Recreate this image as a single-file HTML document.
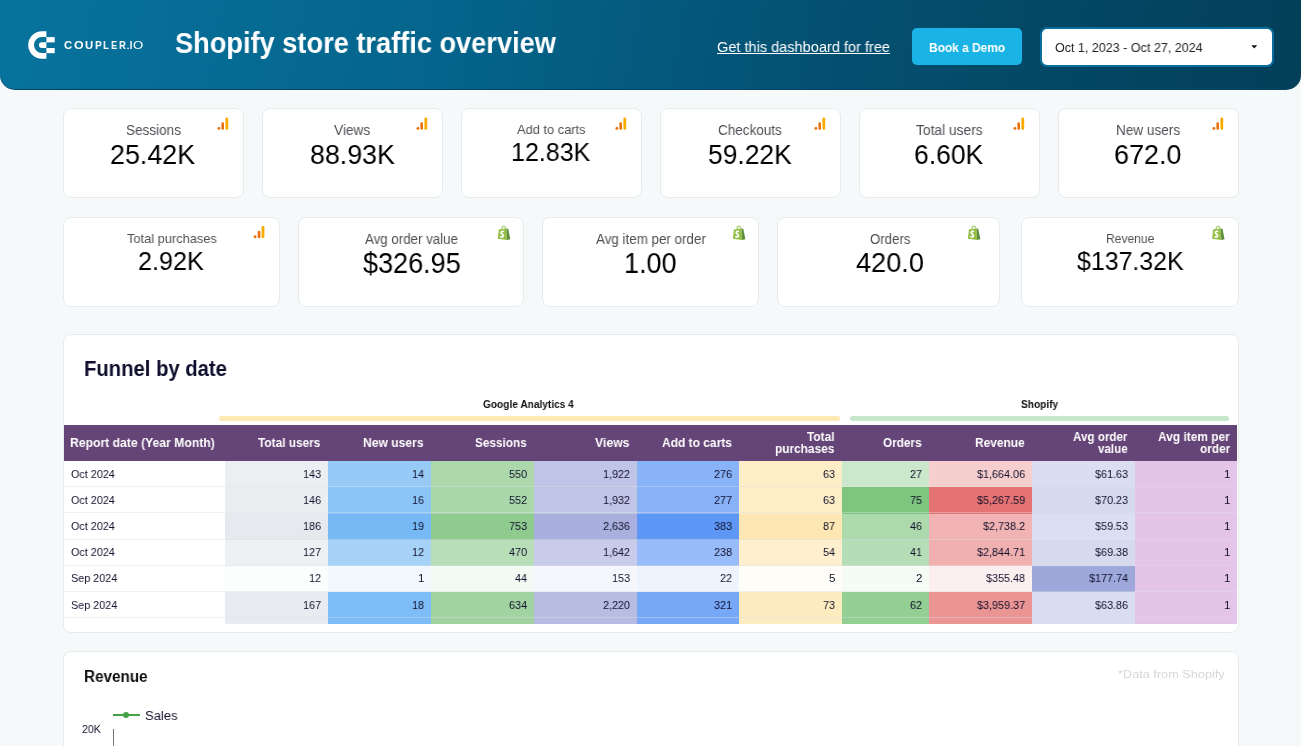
<!DOCTYPE html><html><head><meta charset="utf-8"><title>Shopify store traffic overview</title><style>
*{margin:0;padding:0;box-sizing:border-box}
html,body{width:1301px;height:746px;overflow:hidden;background:#f6f9fa;font-family:"Liberation Sans",sans-serif}
.t{position:absolute;white-space:nowrap;line-height:1;transform-origin:0 0;will-change:transform}
.ic{position:absolute;overflow:visible}
.card{position:absolute;background:#fff;border:1px solid #e8ebee;border-radius:8px}
#hdr{position:absolute;left:0;top:0;width:1301px;height:90px;border-bottom:1px solid #034563;border-radius:0 0 15px 15px;background:linear-gradient(100deg,#07739d 0%,#05648b 35%,#044f70 65%,#033f59 100%)}
#btn{position:absolute;left:912px;top:28px;width:110px;height:37px;border-radius:5px;background:#1ab3e6}
#dd{position:absolute;left:1040px;top:27px;width:234px;height:40px;border-radius:7px;background:#fff;border:2px solid #0b6d9b}
</style></head><body>
<div id="hdr"></div>
<svg class="ic" style="left:27px;top:30px" width="30" height="30" viewBox="27 30 30 30"><path d="M46.4 31.2 H42.0 A13.8 13.8 0 0 0 42.0 58.8 H46.4 V53.0 H42.0 A8.0 8.0 0 0 1 42.0 37.0 H46.4 Z" fill="#fff"/><path d="M46.4 42.2 H41.8 A2.9 2.9 0 0 0 41.8 48.0 H46.4 Z" fill="#fff"/><rect x="46.4" y="37.1" width="8.3" height="5.3" fill="#fff"/><rect x="46.4" y="48.0" width="8.3" height="5.2" fill="#fff"/></svg>
<div class="t" style="left:64.16px;top:40px;font-size:11.3px;color:#fff;font-weight:bold;transform:scaleX(0.9728);">C</div>
<div class="t" style="left:73.81px;top:40px;font-size:11.3px;color:#fff;font-weight:bold;transform:scaleX(1.0951);">O</div>
<div class="t" style="left:85.32px;top:40px;font-size:11.3px;color:#fff;font-weight:bold;">U</div>
<div class="t" style="left:95.14px;top:40px;font-size:11.3px;color:#fff;font-weight:bold;transform:scaleX(0.9005);">P</div>
<div class="t" style="left:103.37px;top:40px;font-size:11.3px;color:#fff;font-weight:bold;transform:scaleX(0.8592);">L</div>
<div class="t" style="left:111.40px;top:40px;font-size:11.3px;color:#fff;font-weight:bold;transform:scaleX(0.8145);">E</div>
<div class="t" style="left:119.39px;top:40px;font-size:11.3px;color:#fff;font-weight:bold;transform:scaleX(0.8362);">R</div>
<div class="t" style="left:126.07px;top:40px;font-size:11.3px;color:#fff;transform:scaleX(1.3041);">.</div>
<div class="t" style="left:129.47px;top:40px;font-size:11.3px;color:#fff;transform:scaleX(1.3041);">I</div>
<div class="t" style="left:133.41px;top:40px;font-size:11.3px;color:#fff;transform:scaleX(1.1627);">O</div>
<div class="t" style="left:174.98px;top:28px;font-size:29.7px;color:#fff;font-weight:bold;transform:scaleX(0.9160);">Shopify store traffic overview</div>
<div class="t" style="left:716.87px;top:40px;font-size:14.7px;color:#fff;transform:scaleX(0.9899);">Get this dashboard for free</div>
<div style="position:absolute;left:717px;top:53px;width:173px;height:1px;background:#fff"></div>
<div id="btn"></div>
<div class="t" style="left:928.72px;top:41px;font-size:13.7px;color:#fff;font-weight:bold;transform:scaleX(0.8710);">Book a Demo</div>
<div id="dd"></div>
<div class="t" style="left:1055.44px;top:42px;font-size:12.6px;color:#222;transform:scaleX(0.9943);">Oct 1, 2023 - Oct 27, 2024</div>
<svg class="ic" style="left:1251px;top:45px" width="7" height="4" viewBox="0 0 7 4"><path d="M0.3 0.3 H6.2 L3.25 3.6 Z" fill="#111"/></svg>
<div class="card" style="left:63px;top:108px;width:181px;height:90px;"></div>
<div class="t" style="left:125.59px;top:123px;font-size:14.1px;color:#4d5054;transform:scaleX(0.9605);">Sessions</div>
<div class="t" style="left:110.46px;top:140px;font-size:28.2px;color:#000;transform:scaleX(0.9532);">25.42K</div>
<svg class="ic" style="left:216px;top:114px" width="16" height="18" viewBox="216 114 16 18"><circle cx="218.90" cy="128.40" r="1.45" fill="#e8710a"/><rect x="221.40" y="122.20" width="2.60" height="7.60" rx="1.3" fill="#e8710a"/><rect x="225.40" y="117.40" width="2.80" height="12.40" rx="1.4" fill="#f9ab00"/></svg>
<div class="card" style="left:262px;top:108px;width:181px;height:90px;"></div>
<div class="t" style="left:334.13px;top:123px;font-size:14.1px;color:#4d5054;transform:scaleX(0.9728);">Views</div>
<div class="t" style="left:309.59px;top:140px;font-size:28.2px;color:#000;transform:scaleX(0.9506);">88.93K</div>
<svg class="ic" style="left:415px;top:114px" width="16" height="18" viewBox="415 114 16 18"><circle cx="417.90" cy="128.40" r="1.45" fill="#e8710a"/><rect x="420.40" y="122.20" width="2.60" height="7.60" rx="1.3" fill="#e8710a"/><rect x="424.40" y="117.40" width="2.80" height="12.40" rx="1.4" fill="#f9ab00"/></svg>
<div class="card" style="left:461px;top:108px;width:181px;height:90px;"></div>
<div class="t" style="left:516.90px;top:123px;font-size:13.4px;color:#4d5054;transform:scaleX(0.9589);">Add to carts</div>
<div class="t" style="left:511.22px;top:140px;font-size:25.9px;color:#000;transform:scaleX(0.9662);">12.83K</div>
<svg class="ic" style="left:614px;top:114px" width="16" height="18" viewBox="614 114 16 18"><circle cx="616.90" cy="128.40" r="1.45" fill="#e8710a"/><rect x="619.40" y="122.20" width="2.60" height="7.60" rx="1.3" fill="#e8710a"/><rect x="623.40" y="117.40" width="2.80" height="12.40" rx="1.4" fill="#f9ab00"/></svg>
<div class="card" style="left:660px;top:108px;width:181px;height:90px;"></div>
<div class="t" style="left:718.02px;top:123px;font-size:14.1px;color:#4d5054;transform:scaleX(0.9584);">Checkouts</div>
<div class="t" style="left:708.44px;top:140px;font-size:28.2px;color:#000;transform:scaleX(0.9377);">59.22K</div>
<svg class="ic" style="left:813px;top:114px" width="16" height="18" viewBox="813 114 16 18"><circle cx="815.90" cy="128.40" r="1.45" fill="#e8710a"/><rect x="818.40" y="122.20" width="2.60" height="7.60" rx="1.3" fill="#e8710a"/><rect x="822.40" y="117.40" width="2.80" height="12.40" rx="1.4" fill="#f9ab00"/></svg>
<div class="card" style="left:859px;top:108px;width:181px;height:90px;"></div>
<div class="t" style="left:915.72px;top:123px;font-size:14.1px;color:#4d5054;transform:scaleX(0.9778);">Total users</div>
<div class="t" style="left:914.47px;top:140px;font-size:28.2px;color:#000;transform:scaleX(0.9401);">6.60K</div>
<svg class="ic" style="left:1012px;top:114px" width="16" height="18" viewBox="1012 114 16 18"><circle cx="1014.90" cy="128.40" r="1.45" fill="#e8710a"/><rect x="1017.40" y="122.20" width="2.60" height="7.60" rx="1.3" fill="#e8710a"/><rect x="1021.40" y="117.40" width="2.80" height="12.40" rx="1.4" fill="#f9ab00"/></svg>
<div class="card" style="left:1058px;top:108px;width:181px;height:90px;"></div>
<div class="t" style="left:1115.71px;top:123px;font-size:14.1px;color:#4d5054;transform:scaleX(0.9631);">New users</div>
<div class="t" style="left:1114.35px;top:140px;font-size:28.2px;color:#000;transform:scaleX(0.9574);">672.0</div>
<svg class="ic" style="left:1211px;top:114px" width="16" height="18" viewBox="1211 114 16 18"><circle cx="1213.90" cy="128.40" r="1.45" fill="#e8710a"/><rect x="1216.40" y="122.20" width="2.60" height="7.60" rx="1.3" fill="#e8710a"/><rect x="1220.40" y="117.40" width="2.80" height="12.40" rx="1.4" fill="#f9ab00"/></svg>
<div class="card" style="left:63px;top:217px;width:217px;height:90px;"></div>
<div class="t" style="left:126.54px;top:232px;font-size:13.5px;color:#4d5054;transform:scaleX(0.9507);">Total purchases</div>
<div class="t" style="left:138.24px;top:248px;font-size:26.5px;color:#000;transform:scaleX(0.9515);">2.92K</div>
<svg class="ic" style="left:252px;top:223px" width="16" height="18" viewBox="252 223 16 18"><circle cx="255.10" cy="236.70" r="1.45" fill="#e8710a"/><rect x="257.70" y="230.70" width="2.70" height="7.50" rx="1.3" fill="#e8710a"/><rect x="261.60" y="225.90" width="2.80" height="12.30" rx="1.4" fill="#f9ab00"/></svg>
<div class="card" style="left:298px;top:217px;width:226px;height:90px;"></div>
<div class="t" style="left:365.00px;top:233px;font-size:13.8px;color:#4d5054;transform:scaleX(0.9637);">Avg order value</div>
<div class="t" style="left:362.73px;top:249px;font-size:28.6px;color:#000;transform:scaleX(0.9455);">$326.95</div>
<svg class="ic" style="left:496px;top:224px" width="16" height="17" viewBox="0 0 16 17"><g transform="translate(1.80 1.80)"><path d="M3.9 3.3 C4.1 1.3 5.0 0.3 6.1 0.3 C7.1 0.3 7.8 1.2 8.1 2.7" fill="none" stroke="#a9cd7c" stroke-width="1.1"/><path d="M1.0 3.7 L8.6 2.5 L9.2 14.1 L0 12.9 Z" fill="#95bf47"/><path d="M8.6 2.5 L10.4 3.3 L12.5 13.4 L9.2 14.1 Z" fill="#5e8e3e"/><path d="M6.1 5.9 C5.2 5.2 3.3 5.4 3.3 6.9 C3.3 8.3 5.6 8.4 5.6 9.9 C5.6 11.3 3.8 11.5 2.5 10.7" fill="none" stroke="#fff" stroke-width="1.7"/></g></svg>
<div class="card" style="left:542px;top:217px;width:217px;height:90px;"></div>
<div class="t" style="left:595.70px;top:233px;font-size:13.8px;color:#4d5054;transform:scaleX(0.9697);">Avg item per order</div>
<div class="t" style="left:624.17px;top:249px;font-size:28.6px;color:#000;transform:scaleX(0.9451);">1.00</div>
<svg class="ic" style="left:731px;top:224px" width="16" height="17" viewBox="0 0 16 17"><g transform="translate(1.90 1.80)"><path d="M3.9 3.3 C4.1 1.3 5.0 0.3 6.1 0.3 C7.1 0.3 7.8 1.2 8.1 2.7" fill="none" stroke="#a9cd7c" stroke-width="1.1"/><path d="M1.0 3.7 L8.6 2.5 L9.2 14.1 L0 12.9 Z" fill="#95bf47"/><path d="M8.6 2.5 L10.4 3.3 L12.5 13.4 L9.2 14.1 Z" fill="#5e8e3e"/><path d="M6.1 5.9 C5.2 5.2 3.3 5.4 3.3 6.9 C3.3 8.3 5.6 8.4 5.6 9.9 C5.6 11.3 3.8 11.5 2.5 10.7" fill="none" stroke="#fff" stroke-width="1.7"/></g></svg>
<div class="card" style="left:777px;top:217px;width:223px;height:90px;"></div>
<div class="t" style="left:870.00px;top:233px;font-size:13.8px;color:#4d5054;transform:scaleX(0.9597);">Orders</div>
<div class="t" style="left:856.36px;top:249px;font-size:27.6px;color:#000;transform:scaleX(0.9840);">420.0</div>
<svg class="ic" style="left:966px;top:224px" width="16" height="17" viewBox="0 0 16 17"><g transform="translate(1.90 1.80)"><path d="M3.9 3.3 C4.1 1.3 5.0 0.3 6.1 0.3 C7.1 0.3 7.8 1.2 8.1 2.7" fill="none" stroke="#a9cd7c" stroke-width="1.1"/><path d="M1.0 3.7 L8.6 2.5 L9.2 14.1 L0 12.9 Z" fill="#95bf47"/><path d="M8.6 2.5 L10.4 3.3 L12.5 13.4 L9.2 14.1 Z" fill="#5e8e3e"/><path d="M6.1 5.9 C5.2 5.2 3.3 5.4 3.3 6.9 C3.3 8.3 5.6 8.4 5.6 9.9 C5.6 11.3 3.8 11.5 2.5 10.7" fill="none" stroke="#fff" stroke-width="1.7"/></g></svg>
<div class="card" style="left:1021px;top:217px;width:218px;height:90px;"></div>
<div class="t" style="left:1105.73px;top:233px;font-size:12.9px;color:#4d5054;transform:scaleX(0.9362);">Revenue</div>
<div class="t" style="left:1076.95px;top:248px;font-size:26.0px;color:#000;transform:scaleX(0.9579);">$137.32K</div>
<svg class="ic" style="left:1211px;top:224px" width="16" height="17" viewBox="0 0 16 17"><g transform="translate(1.10 1.80)"><path d="M3.9 3.3 C4.1 1.3 5.0 0.3 6.1 0.3 C7.1 0.3 7.8 1.2 8.1 2.7" fill="none" stroke="#a9cd7c" stroke-width="1.1"/><path d="M1.0 3.7 L8.6 2.5 L9.2 14.1 L0 12.9 Z" fill="#95bf47"/><path d="M8.6 2.5 L10.4 3.3 L12.5 13.4 L9.2 14.1 Z" fill="#5e8e3e"/><path d="M6.1 5.9 C5.2 5.2 3.3 5.4 3.3 6.9 C3.3 8.3 5.6 8.4 5.6 9.9 C5.6 11.3 3.8 11.5 2.5 10.7" fill="none" stroke="#fff" stroke-width="1.7"/></g></svg>
<div class="card" style="left:63px;top:334px;width:1176px;height:299px;"></div>
<div class="t" style="left:84.18px;top:358px;font-size:22.2px;color:#0f0f2d;font-weight:bold;transform:scaleX(0.9126);">Funnel by date</div>
<div class="t" style="left:482.99px;top:399px;font-size:10.9px;color:#111;font-weight:bold;transform:scaleX(0.9298);">Google Analytics 4</div>
<div class="t" style="left:1020.50px;top:399px;font-size:10.9px;color:#111;font-weight:bold;transform:scaleX(0.9326);">Shopify</div>
<div style="position:absolute;left:219px;top:416px;width:621px;height:5px;border-radius:2.5px;background:#fde9b3"></div>
<div style="position:absolute;left:850px;top:416px;width:379px;height:5px;border-radius:2.5px;background:#c8e6c9"></div>
<div style="position:absolute;left:64px;top:425px;width:1173px;height:36px;background:#654577"></div>
<div class="t" style="left:70.41px;top:436px;font-size:13.1px;color:#fff;font-weight:bold;transform:scaleX(0.9303);">Report date (Year Month)</div>
<div class="t" style="left:258.28px;top:436px;font-size:13.1px;color:#fff;font-weight:bold;transform:scaleX(0.9055);">Total users</div>
<div class="t" style="left:362.91px;top:436px;font-size:13.1px;color:#fff;font-weight:bold;transform:scaleX(0.9248);">New users</div>
<div class="t" style="left:474.55px;top:436px;font-size:13.1px;color:#fff;font-weight:bold;transform:scaleX(0.8994);">Sessions</div>
<div class="t" style="left:594.74px;top:436px;font-size:13.1px;color:#fff;font-weight:bold;transform:scaleX(0.9342);">Views</div>
<div class="t" style="left:662.30px;top:436px;font-size:13.1px;color:#fff;font-weight:bold;transform:scaleX(0.9155);">Add to carts</div>
<div class="t" style="left:807.35px;top:430px;font-size:13.1px;color:#fff;font-weight:bold;transform:scaleX(0.9060);">Total</div>
<div class="t" style="left:775.13px;top:442px;font-size:13.1px;color:#fff;font-weight:bold;transform:scaleX(0.9060);">purchases</div>
<div class="t" style="left:883.23px;top:436px;font-size:13.1px;color:#fff;font-weight:bold;transform:scaleX(0.8969);">Orders</div>
<div class="t" style="left:974.92px;top:436px;font-size:13.1px;color:#fff;font-weight:bold;transform:scaleX(0.9108);">Revenue</div>
<div class="t" style="left:1072.98px;top:430px;font-size:13.1px;color:#fff;font-weight:bold;transform:scaleX(0.8863);">Avg order</div>
<div class="t" style="left:1097.94px;top:442px;font-size:13.1px;color:#fff;font-weight:bold;transform:scaleX(0.8863);">value</div>
<div class="t" style="left:1158.22px;top:430px;font-size:13.1px;color:#fff;font-weight:bold;transform:scaleX(0.9099);">Avg item per</div>
<div class="t" style="left:1199.52px;top:442px;font-size:13.1px;color:#fff;font-weight:bold;transform:scaleX(0.9099);">order</div>
<div style="position:absolute;left:64px;top:461px;width:1173px;height:163px;overflow:hidden">
<div style="position:absolute;left:161px;top:0.0px;width:103px;height:26.25px;background:#ebeff2"></div>
<div style="position:absolute;left:264px;top:0.0px;width:103px;height:26.25px;background:#98caf8"></div>
<div style="position:absolute;left:367px;top:0.0px;width:103px;height:26.25px;background:#acd8ac"></div>
<div style="position:absolute;left:470px;top:0.0px;width:103px;height:26.25px;background:#c0c4e6"></div>
<div style="position:absolute;left:573px;top:0.0px;width:102px;height:26.25px;background:#89b3f8"></div>
<div style="position:absolute;left:675px;top:0.0px;width:103px;height:26.25px;background:#feeec7"></div>
<div style="position:absolute;left:778px;top:0.0px;width:87px;height:26.25px;background:#cce8cc"></div>
<div style="position:absolute;left:865px;top:0.0px;width:103px;height:26.25px;background:#f6cece"></div>
<div style="position:absolute;left:968px;top:0.0px;width:103px;height:26.25px;background:#dbdef1"></div>
<div style="position:absolute;left:1071px;top:0.0px;width:102px;height:26.25px;background:#e5c4ea"></div>
<div style="position:absolute;left:0;top:25.1px;width:1173px;height:1px;background:rgba(220,224,228,0.42)"></div>
<div style="position:absolute;left:161px;top:26.25px;width:103px;height:26.25px;background:#ebeef1"></div>
<div style="position:absolute;left:264px;top:26.25px;width:103px;height:26.25px;background:#8bc4f6"></div>
<div style="position:absolute;left:367px;top:26.25px;width:103px;height:26.25px;background:#abd8ab"></div>
<div style="position:absolute;left:470px;top:26.25px;width:103px;height:26.25px;background:#c0c4e6"></div>
<div style="position:absolute;left:573px;top:26.25px;width:102px;height:26.25px;background:#88b2f8"></div>
<div style="position:absolute;left:675px;top:26.25px;width:103px;height:26.25px;background:#feeec7"></div>
<div style="position:absolute;left:778px;top:26.25px;width:87px;height:26.25px;background:#7ec57e"></div>
<div style="position:absolute;left:865px;top:26.25px;width:103px;height:26.25px;background:#e57373"></div>
<div style="position:absolute;left:968px;top:26.25px;width:103px;height:26.25px;background:#d6daef"></div>
<div style="position:absolute;left:1071px;top:26.25px;width:102px;height:26.25px;background:#e5c4ea"></div>
<div style="position:absolute;left:0;top:51.35px;width:1173px;height:1px;background:rgba(220,224,228,0.42)"></div>
<div style="position:absolute;left:161px;top:52.5px;width:103px;height:26.25px;background:#e6eaee"></div>
<div style="position:absolute;left:264px;top:52.5px;width:103px;height:26.25px;background:#76b9f5"></div>
<div style="position:absolute;left:367px;top:52.5px;width:103px;height:26.25px;background:#8fcb8f"></div>
<div style="position:absolute;left:470px;top:52.5px;width:103px;height:26.25px;background:#aab0de"></div>
<div style="position:absolute;left:573px;top:52.5px;width:102px;height:26.25px;background:#5e97f6"></div>
<div style="position:absolute;left:675px;top:52.5px;width:103px;height:26.25px;background:#fde8b3"></div>
<div style="position:absolute;left:778px;top:52.5px;width:87px;height:26.25px;background:#addaad"></div>
<div style="position:absolute;left:865px;top:52.5px;width:103px;height:26.25px;background:#f1b3b3"></div>
<div style="position:absolute;left:968px;top:52.5px;width:103px;height:26.25px;background:#dcdff1"></div>
<div style="position:absolute;left:1071px;top:52.5px;width:102px;height:26.25px;background:#e5c4ea"></div>
<div style="position:absolute;left:0;top:77.6px;width:1173px;height:1px;background:rgba(220,224,228,0.42)"></div>
<div style="position:absolute;left:161px;top:78.75px;width:103px;height:26.25px;background:#eef0f3"></div>
<div style="position:absolute;left:264px;top:78.75px;width:103px;height:26.25px;background:#a6d2f8"></div>
<div style="position:absolute;left:367px;top:78.75px;width:103px;height:26.25px;background:#b7deb7"></div>
<div style="position:absolute;left:470px;top:78.75px;width:103px;height:26.25px;background:#c8ccea"></div>
<div style="position:absolute;left:573px;top:78.75px;width:102px;height:26.25px;background:#98bcf9"></div>
<div style="position:absolute;left:675px;top:78.75px;width:103px;height:26.25px;background:#fef0ce"></div>
<div style="position:absolute;left:778px;top:78.75px;width:87px;height:26.25px;background:#b6deb6"></div>
<div style="position:absolute;left:865px;top:78.75px;width:103px;height:26.25px;background:#f0b0b0"></div>
<div style="position:absolute;left:968px;top:78.75px;width:103px;height:26.25px;background:#d7daef"></div>
<div style="position:absolute;left:1071px;top:78.75px;width:102px;height:26.25px;background:#e5c4ea"></div>
<div style="position:absolute;left:0;top:103.85px;width:1173px;height:1px;background:rgba(220,224,228,0.42)"></div>
<div style="position:absolute;left:161px;top:105.0px;width:103px;height:26.25px;background:#fcfdfd"></div>
<div style="position:absolute;left:264px;top:105.0px;width:103px;height:26.25px;background:#f1f8fe"></div>
<div style="position:absolute;left:367px;top:105.0px;width:103px;height:26.25px;background:#f3faf3"></div>
<div style="position:absolute;left:470px;top:105.0px;width:103px;height:26.25px;background:#f6f7fc"></div>
<div style="position:absolute;left:573px;top:105.0px;width:102px;height:26.25px;background:#eef4fe"></div>
<div style="position:absolute;left:675px;top:105.0px;width:103px;height:26.25px;background:#fffdf7"></div>
<div style="position:absolute;left:778px;top:105.0px;width:87px;height:26.25px;background:#f5fbf5"></div>
<div style="position:absolute;left:865px;top:105.0px;width:103px;height:26.25px;background:#fcefef"></div>
<div style="position:absolute;left:968px;top:105.0px;width:103px;height:26.25px;background:#9fa8da"></div>
<div style="position:absolute;left:1071px;top:105.0px;width:102px;height:26.25px;background:#e5c4ea"></div>
<div style="position:absolute;left:0;top:130.1px;width:1173px;height:1px;background:rgba(220,224,228,0.42)"></div>
<div style="position:absolute;left:161px;top:131.25px;width:103px;height:26.25px;background:#e8ecf0"></div>
<div style="position:absolute;left:264px;top:131.25px;width:103px;height:26.25px;background:#7dbcf6"></div>
<div style="position:absolute;left:367px;top:131.25px;width:103px;height:26.25px;background:#a0d3a0"></div>
<div style="position:absolute;left:470px;top:131.25px;width:103px;height:26.25px;background:#b7bce3"></div>
<div style="position:absolute;left:573px;top:131.25px;width:102px;height:26.25px;background:#77a7f7"></div>
<div style="position:absolute;left:675px;top:131.25px;width:103px;height:26.25px;background:#fdecbf"></div>
<div style="position:absolute;left:778px;top:131.25px;width:87px;height:26.25px;background:#93cf93"></div>
<div style="position:absolute;left:865px;top:131.25px;width:103px;height:26.25px;background:#eb9494"></div>
<div style="position:absolute;left:968px;top:131.25px;width:103px;height:26.25px;background:#d9ddf1"></div>
<div style="position:absolute;left:1071px;top:131.25px;width:102px;height:26.25px;background:#e5c4ea"></div>
<div style="position:absolute;left:0;top:156.35px;width:1173px;height:1px;background:rgba(220,224,228,0.42)"></div>
<div style="position:absolute;left:161px;top:157.5px;width:103px;height:26.25px;background:#e8ecf0"></div>
<div style="position:absolute;left:264px;top:157.5px;width:103px;height:26.25px;background:#7dbcf6"></div>
<div style="position:absolute;left:367px;top:157.5px;width:103px;height:26.25px;background:#a0d3a0"></div>
<div style="position:absolute;left:470px;top:157.5px;width:103px;height:26.25px;background:#b7bce3"></div>
<div style="position:absolute;left:573px;top:157.5px;width:102px;height:26.25px;background:#77a7f7"></div>
<div style="position:absolute;left:675px;top:157.5px;width:103px;height:26.25px;background:#fdecbf"></div>
<div style="position:absolute;left:778px;top:157.5px;width:87px;height:26.25px;background:#93cf93"></div>
<div style="position:absolute;left:865px;top:157.5px;width:103px;height:26.25px;background:#eb9494"></div>
<div style="position:absolute;left:968px;top:157.5px;width:103px;height:26.25px;background:#d9ddf1"></div>
<div style="position:absolute;left:1071px;top:157.5px;width:102px;height:26.25px;background:#e5c4ea"></div>
<div style="position:absolute;left:0;top:182.6px;width:1173px;height:1px;background:rgba(220,224,228,0.42)"></div>
</div>
<div class="t" style="left:70.61px;top:468px;font-size:11.6px;color:#12122c;transform:scaleX(0.9314);">Oct 2024</div>
<div class="t" style="left:302.94px;top:468px;font-size:11.6px;color:#12122c;transform:scaleX(0.9314);">143</div>
<div class="t" style="left:411.83px;top:468px;font-size:11.6px;color:#12122c;transform:scaleX(0.9314);">14</div>
<div class="t" style="left:508.89px;top:468px;font-size:11.6px;color:#12122c;transform:scaleX(0.9314);">550</div>
<div class="t" style="left:603.03px;top:468px;font-size:11.6px;color:#12122c;transform:scaleX(0.9314);">1,922</div>
<div class="t" style="left:713.94px;top:468px;font-size:11.6px;color:#12122c;transform:scaleX(0.9314);">276</div>
<div class="t" style="left:822.94px;top:468px;font-size:11.6px;color:#12122c;transform:scaleX(0.9314);">63</div>
<div class="t" style="left:910.05px;top:468px;font-size:11.6px;color:#12122c;transform:scaleX(0.9314);">27</div>
<div class="t" style="left:976.85px;top:468px;font-size:11.6px;color:#12122c;transform:scaleX(0.9314);">$1,664.06</div>
<div class="t" style="left:1094.87px;top:468px;font-size:11.6px;color:#12122c;transform:scaleX(0.9314);">$61.63</div>
<div class="t" style="left:1223.99px;top:468px;font-size:11.6px;color:#12122c;transform:scaleX(0.9314);">1</div>
<div class="t" style="left:70.61px;top:494px;font-size:11.6px;color:#12122c;transform:scaleX(0.9314);">Oct 2024</div>
<div class="t" style="left:302.94px;top:494px;font-size:11.6px;color:#12122c;transform:scaleX(0.9314);">146</div>
<div class="t" style="left:411.94px;top:494px;font-size:11.6px;color:#12122c;transform:scaleX(0.9314);">16</div>
<div class="t" style="left:509.05px;top:494px;font-size:11.6px;color:#12122c;transform:scaleX(0.9314);">552</div>
<div class="t" style="left:603.03px;top:494px;font-size:11.6px;color:#12122c;transform:scaleX(0.9314);">1,932</div>
<div class="t" style="left:714.05px;top:494px;font-size:11.6px;color:#12122c;transform:scaleX(0.9314);">277</div>
<div class="t" style="left:822.94px;top:494px;font-size:11.6px;color:#12122c;transform:scaleX(0.9314);">63</div>
<div class="t" style="left:909.94px;top:494px;font-size:11.6px;color:#12122c;transform:scaleX(0.9314);">75</div>
<div class="t" style="left:976.91px;top:494px;font-size:11.6px;color:#12122c;transform:scaleX(0.9314);">$5,267.59</div>
<div class="t" style="left:1094.87px;top:494px;font-size:11.6px;color:#12122c;transform:scaleX(0.9314);">$70.23</div>
<div class="t" style="left:1223.99px;top:494px;font-size:11.6px;color:#12122c;transform:scaleX(0.9314);">1</div>
<div class="t" style="left:70.61px;top:520px;font-size:11.6px;color:#12122c;transform:scaleX(0.9314);">Oct 2024</div>
<div class="t" style="left:302.94px;top:520px;font-size:11.6px;color:#12122c;transform:scaleX(0.9314);">186</div>
<div class="t" style="left:411.99px;top:520px;font-size:11.6px;color:#12122c;transform:scaleX(0.9314);">19</div>
<div class="t" style="left:508.94px;top:520px;font-size:11.6px;color:#12122c;transform:scaleX(0.9314);">753</div>
<div class="t" style="left:602.92px;top:520px;font-size:11.6px;color:#12122c;transform:scaleX(0.9314);">2,636</div>
<div class="t" style="left:713.94px;top:520px;font-size:11.6px;color:#12122c;transform:scaleX(0.9314);">383</div>
<div class="t" style="left:823.05px;top:520px;font-size:11.6px;color:#12122c;transform:scaleX(0.9314);">87</div>
<div class="t" style="left:909.94px;top:520px;font-size:11.6px;color:#12122c;transform:scaleX(0.9314);">46</div>
<div class="t" style="left:983.01px;top:520px;font-size:11.6px;color:#12122c;transform:scaleX(0.9314);">$2,738.2</div>
<div class="t" style="left:1094.87px;top:520px;font-size:11.6px;color:#12122c;transform:scaleX(0.9314);">$59.53</div>
<div class="t" style="left:1223.99px;top:520px;font-size:11.6px;color:#12122c;transform:scaleX(0.9314);">1</div>
<div class="t" style="left:70.61px;top:546px;font-size:11.6px;color:#12122c;transform:scaleX(0.9314);">Oct 2024</div>
<div class="t" style="left:303.05px;top:546px;font-size:11.6px;color:#12122c;transform:scaleX(0.9314);">127</div>
<div class="t" style="left:412.05px;top:546px;font-size:11.6px;color:#12122c;transform:scaleX(0.9314);">12</div>
<div class="t" style="left:508.89px;top:546px;font-size:11.6px;color:#12122c;transform:scaleX(0.9314);">470</div>
<div class="t" style="left:603.03px;top:546px;font-size:11.6px;color:#12122c;transform:scaleX(0.9314);">1,642</div>
<div class="t" style="left:713.94px;top:546px;font-size:11.6px;color:#12122c;transform:scaleX(0.9314);">238</div>
<div class="t" style="left:822.83px;top:546px;font-size:11.6px;color:#12122c;transform:scaleX(0.9314);">54</div>
<div class="t" style="left:909.99px;top:546px;font-size:11.6px;color:#12122c;transform:scaleX(0.9314);">41</div>
<div class="t" style="left:976.91px;top:546px;font-size:11.6px;color:#12122c;transform:scaleX(0.9314);">$2,844.71</div>
<div class="t" style="left:1094.87px;top:546px;font-size:11.6px;color:#12122c;transform:scaleX(0.9314);">$69.38</div>
<div class="t" style="left:1223.99px;top:546px;font-size:11.6px;color:#12122c;transform:scaleX(0.9314);">1</div>
<div class="t" style="left:70.61px;top:572px;font-size:11.6px;color:#12122c;transform:scaleX(0.9314);">Sep 2024</div>
<div class="t" style="left:309.05px;top:572px;font-size:11.6px;color:#12122c;transform:scaleX(0.9314);">12</div>
<div class="t" style="left:417.99px;top:572px;font-size:11.6px;color:#12122c;transform:scaleX(0.9314);">1</div>
<div class="t" style="left:514.83px;top:572px;font-size:11.6px;color:#12122c;transform:scaleX(0.9314);">44</div>
<div class="t" style="left:611.94px;top:572px;font-size:11.6px;color:#12122c;transform:scaleX(0.9314);">153</div>
<div class="t" style="left:720.05px;top:572px;font-size:11.6px;color:#12122c;transform:scaleX(0.9314);">22</div>
<div class="t" style="left:828.94px;top:572px;font-size:11.6px;color:#12122c;transform:scaleX(0.9314);">5</div>
<div class="t" style="left:916.04px;top:572px;font-size:11.6px;color:#12122c;transform:scaleX(0.9314);">2</div>
<div class="t" style="left:985.88px;top:572px;font-size:11.6px;color:#12122c;transform:scaleX(0.9314);">$355.48</div>
<div class="t" style="left:1088.77px;top:572px;font-size:11.6px;color:#12122c;transform:scaleX(0.9314);">$177.74</div>
<div class="t" style="left:1223.99px;top:572px;font-size:11.6px;color:#12122c;transform:scaleX(0.9314);">1</div>
<div class="t" style="left:70.61px;top:599px;font-size:11.6px;color:#12122c;transform:scaleX(0.9314);">Sep 2024</div>
<div class="t" style="left:303.05px;top:599px;font-size:11.6px;color:#12122c;transform:scaleX(0.9314);">167</div>
<div class="t" style="left:411.94px;top:599px;font-size:11.6px;color:#12122c;transform:scaleX(0.9314);">18</div>
<div class="t" style="left:508.84px;top:599px;font-size:11.6px;color:#12122c;transform:scaleX(0.9314);">634</div>
<div class="t" style="left:602.87px;top:599px;font-size:11.6px;color:#12122c;transform:scaleX(0.9314);">2,220</div>
<div class="t" style="left:714.00px;top:599px;font-size:11.6px;color:#12122c;transform:scaleX(0.9314);">321</div>
<div class="t" style="left:822.94px;top:599px;font-size:11.6px;color:#12122c;transform:scaleX(0.9314);">73</div>
<div class="t" style="left:910.05px;top:599px;font-size:11.6px;color:#12122c;transform:scaleX(0.9314);">62</div>
<div class="t" style="left:976.96px;top:599px;font-size:11.6px;color:#12122c;transform:scaleX(0.9314);">$3,959.37</div>
<div class="t" style="left:1094.87px;top:599px;font-size:11.6px;color:#12122c;transform:scaleX(0.9314);">$63.86</div>
<div class="t" style="left:1223.99px;top:599px;font-size:11.6px;color:#12122c;transform:scaleX(0.9314);">1</div>
<div class="card" style="left:63px;top:651px;width:1176px;height:120px"></div>
<div class="t" style="left:84.11px;top:669px;font-size:15.8px;color:#111;font-weight:bold;transform:scaleX(0.9653);">Revenue</div>
<div class="t" style="left:1117.81px;top:669px;font-size:11.8px;color:#d6d6d6;transform:scaleX(1.0780);">*Data from Shopify</div>
<div style="position:absolute;left:112.6px;top:714.3px;width:27px;height:2px;background:#43a047"></div>
<div style="position:absolute;left:123px;top:712.2px;width:6.2px;height:6.2px;border-radius:50%;background:#43a047"></div>
<div class="t" style="left:145.11px;top:709px;font-size:13.7px;color:#12122c;transform:scaleX(0.9501);">Sales</div>
<div class="t" style="left:82.47px;top:724px;font-size:11.3px;color:#12122c;transform:scaleX(0.9391);">20K</div>
<div style="position:absolute;left:112.5px;top:729px;width:1.3px;height:20px;background:#777"></div>
</body></html>
